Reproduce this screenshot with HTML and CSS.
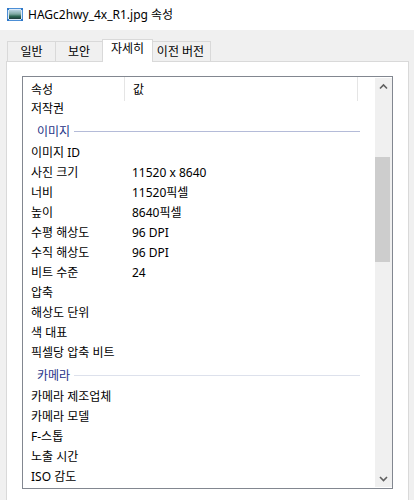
FILE: index.html
```html
<!DOCTYPE html>
<html lang="ko">
<head>
    <meta charset="UTF-8">
    <title>HAGc2hwy_4x_R1.jpg 속성</title>
    <link rel="stylesheet" href="styles.css">
</head>
<body>
    <div class="titlebar">
        <svg class="file-icon" width="16" height="13" viewBox="0 0 16 13">
            <defs>
                <linearGradient id="pic" x1="0" y1="0" x2="0" y2="1">
                    <stop offset="0" stop-color="#b9d3e0"/>
                    <stop offset="0.45" stop-color="#7fa9a3"/>
                    <stop offset="0.7" stop-color="#2f6a55"/>
                    <stop offset="1" stop-color="#1d3b3a"/>
                </linearGradient>
            </defs>
            <rect x="0.5" y="0.5" width="15" height="12" fill="#dbe9f6" stroke="#4d8fd6"/>
            <rect x="2" y="2" width="12" height="9" fill="url(#pic)"/>
            <rect x="0" y="0" width="2" height="2" fill="#2e78c9"/>
            <rect x="14" y="0" width="2" height="2" fill="#2e78c9"/>
            <rect x="0" y="11" width="2" height="2" fill="#2e78c9"/>
            <rect x="14" y="11" width="2" height="2" fill="#2e78c9"/>
        </svg>
        <span class="title">HAGc2hwy_4x_R1.jpg 속성</span>
    </div>

    <div class="tabs">
        <div class="tab tab-general">일반</div>
        <div class="tab tab-security">보안</div>
        <div class="tab tab-details active">자세히</div>
        <div class="tab tab-versions">이전 버전</div>
    </div>

    <div class="panel">
        <div class="listbox">
            <div class="list-main">
                <div class="list-header">
                    <div class="col-name">속성</div>
                    <div class="col-value">값</div>
                    <div class="col-rest"></div>
                </div>
                <div class="rows">
                    <div class="row"><div class="col-name">저작권</div><div class="col-value"></div></div>
                    <div class="group"><span>이미지</span><i class="group-line"></i></div>
                    <div class="row"><div class="col-name">이미지 ID</div><div class="col-value"></div></div>
                    <div class="row"><div class="col-name">사진 크기</div><div class="col-value">11520 x 8640</div></div>
                    <div class="row"><div class="col-name">너비</div><div class="col-value">11520픽셀</div></div>
                    <div class="row"><div class="col-name">높이</div><div class="col-value">8640픽셀</div></div>
                    <div class="row"><div class="col-name">수평 해상도</div><div class="col-value">96 DPI</div></div>
                    <div class="row"><div class="col-name">수직 해상도</div><div class="col-value">96 DPI</div></div>
                    <div class="row"><div class="col-name">비트 수준</div><div class="col-value">24</div></div>
                    <div class="row"><div class="col-name">압축</div><div class="col-value"></div></div>
                    <div class="row"><div class="col-name">해상도 단위</div><div class="col-value"></div></div>
                    <div class="row"><div class="col-name">색 대표</div><div class="col-value"></div></div>
                    <div class="row"><div class="col-name">픽셀당 압축 비트</div><div class="col-value"></div></div>
                    <div class="group faded"><span>카메라</span><i class="group-line"></i></div>
                    <div class="row"><div class="col-name">카메라 제조업체</div><div class="col-value"></div></div>
                    <div class="row"><div class="col-name">카메라 모델</div><div class="col-value"></div></div>
                    <div class="row"><div class="col-name">F-스톱</div><div class="col-value"></div></div>
                    <div class="row"><div class="col-name">노출 시간</div><div class="col-value"></div></div>
                    <div class="row"><div class="col-name">ISO 감도</div><div class="col-value"></div></div>
                </div>
            </div>
            <div class="scrollbar">
                <svg class="arrow" width="17" height="17" viewBox="0 0 17 17">
                    <polyline points="5,10.5 8.5,7 12,10.5" fill="none" stroke="#606060" stroke-width="1.6"/>
                </svg>
                <div class="track">
                    <div class="thumb"></div>
                </div>
                <svg class="arrow" width="17" height="17" viewBox="0 0 17 17">
                    <polyline points="5,7 8.5,10.5 12,7" fill="none" stroke="#606060" stroke-width="1.6"/>
                </svg>
            </div>
        </div>
    </div>
</body>
</html>
```

FILE: styles.css
```css
body {
    margin: 0;
    padding: 0;
    background-color: #f0f0f0;
    font-family: "Noto Sans", "Noto Sans CJK KR", sans-serif;
    font-size: 12px;
    color: #000;
    height: 500px;
    overflow: hidden;
}

.titlebar {
    height: 30px;
    background-color: #fff;
    display: flex;
    align-items: center;
    padding-left: 7px;
    gap: 5px;
}

.file-icon {
    display: block;
    margin-top: -1px;
}

.title {
    line-height: 16px;
}

/* tab strip */
.tabs {
    display: flex;
    align-items: flex-end;
    height: 31px;
    padding-left: 7px;
}

.tab {
    height: 19px;
    line-height: 20px;
    border: 1px solid #d9d9d9;
    border-bottom: none;
    background-color: #f0f0f0;
    text-align: center;
    box-sizing: content-box;
}

.tab + .tab {
    margin-left: -1px;
}

.tab-general {
    width: 47px;
}

.tab-security {
    width: 46px;
}

.tab-details {
    width: 49px;
}

.tab-versions {
    width: 59px;
}

.tab.active {
    height: 22px;
    line-height: 18px;
    background-color: #fff;
    margin: 0 -2px -1px -1px;
    position: relative;
    z-index: 1;
}

.tab.active + .tab {
    margin-left: -1px;
}

.panel {
    margin: 0 5px 0 6px;
    height: 460px;
    background-color: #fff;
    border: 1px solid #d9d9d9;
    padding: 14px 15px 0 15px;
    box-sizing: border-box;
}

.listbox {
    display: flex;
    height: 413px;
    border: 1px solid #828790;
    box-sizing: border-box;
    background-color: #fff;
}

.list-main {
    flex: 1;
    overflow: hidden;
}

.list-header {
    display: flex;
    height: 24px;
    margin-bottom: -2px;
    align-items: center;
}

.list-header > div {
    height: 24px;
    line-height: 25px;
    box-sizing: border-box;
}

.list-header .col-name {
    width: 102px;
    border-right: 1px solid #e5e5e5;
}

.list-header .col-value {
    width: 233px;
    border-right: 1px solid #e5e5e5;
}

.col-name {
    width: 101px;
    padding-left: 8px;
    box-sizing: border-box;
    white-space: nowrap;
}

.col-value {
    padding-left: 8px;
    white-space: nowrap;
}

.row {
    display: flex;
    height: 20px;
    line-height: 20px;
    align-items: center;
}

.group {
    display: flex;
    align-items: center;
    height: 24px;
    padding-left: 14px;
    gap: 4px;
    color: #1e3287;
}

.group-line {
    display: block;
    width: 286px;
    height: 1px;
    background-color: #b4bbd8;
}

.group.faded .group-line {
    background-color: #dde1ec;
}

/* scrollbar */
.scrollbar {
    width: 17px;
    margin: 1px 0;
    background-color: #f0f0f0;
    display: flex;
    flex-direction: column;
}

.arrow {
    display: block;
}

.track {
    flex: 1;
    padding-top: 62px;
}

.thumb {
    width: 15px;
    height: 105px;
    background-color: #cdcdcd;
}
```
